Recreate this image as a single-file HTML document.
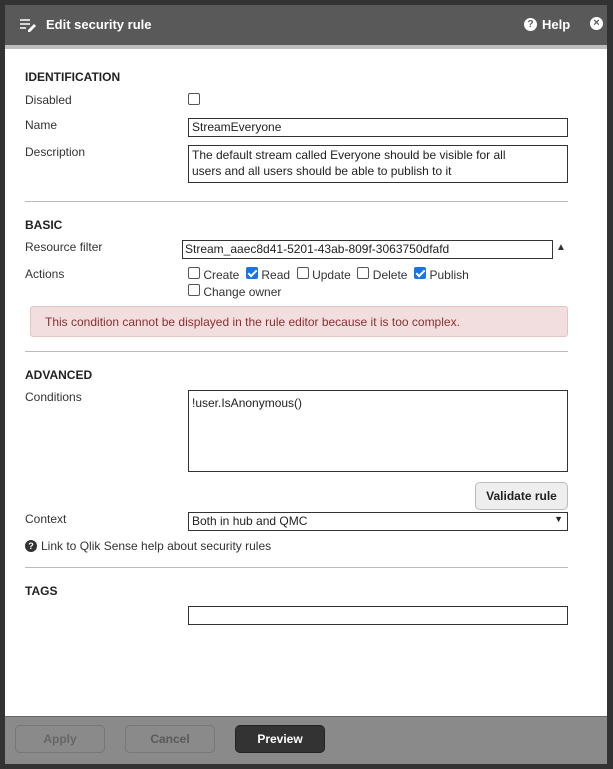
<!DOCTYPE html>
<html><head><style>
*{box-sizing:border-box;margin:0;padding:0}
body{width:613px;height:769px;background:#333;position:relative;font-family:"Liberation Sans",sans-serif;font-size:12px;color:#333;overflow:hidden}
.a{position:absolute}
.hdr{left:5px;top:5px;width:602px;height:40px;background:#595959;color:#fff;font-weight:bold;font-size:13px}
.bar{left:5px;top:45px;width:602px;height:4px;background:#bdbdbd}
.main{left:5px;top:49px;width:602px;height:667px;background:#fff}
.ftr{left:5px;top:716px;width:602px;height:48px;background:#8a8a8a;border-top:1px solid #666}
.h{font-weight:bold;font-size:12px;color:#222}
.lbl{font-size:12px;color:#333}
.inp{border:1px solid #333;background:#fff;font-size:12px;padding:1px 3px;color:#222}
.cb{width:12px;height:12px;border:1px solid #555;border-radius:2px;background:#fff;display:inline-block}
.cbc{background:#1a73e8;border-color:#1a73e8;position:relative}
.cbc:after{content:"";position:absolute;left:3px;top:0px;width:3px;height:7px;border:solid #fff;border-width:0 2px 2px 0;transform:rotate(45deg)}
.hr{left:25px;width:543px;height:1px;background:#bbb}
.btn{height:28px;border-radius:5px;text-align:center;line-height:26px;font-weight:bold;font-size:12px}
</style></head><body>
<div class="a hdr">
 <svg class="a" style="left:14px;top:13px" width="18" height="14" viewBox="0 0 18 14"><path d="M1 2h10M1 6h10M1 10h6" stroke="#fff" stroke-width="1.5"/><path d="M9 12l6-6 2 2-6 6h-2z" fill="#fff"/></svg>
 <div class="a" style="left:41px;top:12px">Edit security rule</div>
 <div class="a" style="left:519px;top:13px;width:13px;height:13px;border-radius:50%;background:#fff;color:#595959;font-size:10px;text-align:center;line-height:13px">?</div>
 <div class="a" style="left:537px;top:12px">Help</div>
 <div class="a" style="left:585px;top:12px;width:13px;height:13px;border-radius:50%;background:#fff;color:#595959;font-size:11px;text-align:center;line-height:13px">×</div>
</div>
<div class="a bar"></div>
<div class="a main"></div>
<div class="a h" style="left:25px;top:70px">IDENTIFICATION</div>
<div class="a lbl" style="left:25px;top:93px">Disabled</div>
<div class="a cb" style="left:188px;top:93px"></div>
<div class="a lbl" style="left:25px;top:118px">Name</div>
<div class="a inp" style="left:188px;top:118px;width:380px;height:19px">StreamEveryone</div>
<div class="a lbl" style="left:25px;top:145px">Description</div>
<div class="a inp" style="left:188px;top:145px;width:380px;height:38px;line-height:16px">The default stream called Everyone should be visible for all<br>users and all users should be able to publish to it</div>
<div class="a hr" style="top:201px"></div>
<div class="a h" style="left:25px;top:218px">BASIC</div>
<div class="a lbl" style="left:25px;top:240px">Resource filter</div>
<div class="a inp" style="left:182px;top:240px;width:371px;height:19px;padding-left:2px">Stream_aaec8d41-5201-43ab-809f-3063750dfafd</div>
<div class="a" style="left:556px;top:242px;font-size:10px;color:#333">▲</div>
<div class="a lbl" style="left:25px;top:267px">Actions</div>
<div class="a" style="left:188px;top:267px;font-size:12px">
<span class="cb"></span> Create&nbsp; <span class="cb cbc"></span> Read&nbsp; <span class="cb"></span> Update&nbsp; <span class="cb"></span> Delete&nbsp; <span class="cb cbc"></span> Publish</div>
<div class="a" style="left:188px;top:284px;font-size:12px"><span class="cb"></span> Change owner</div>
<div class="a" style="left:30px;top:306px;width:538px;height:31px;background:#f2dede;border:1px solid #e5c4c4;border-radius:3px;color:#8a3030;padding:8px 0 0 14px">This condition cannot be displayed in the rule editor because it is too complex.</div>
<div class="a hr" style="top:351px"></div>
<div class="a h" style="left:25px;top:368px">ADVANCED</div>
<div class="a lbl" style="left:25px;top:390px">Conditions</div>
<div class="a inp" style="left:188px;top:390px;width:380px;height:82px;padding-top:5px">!user.IsAnonymous()</div>
<div class="a btn" style="left:475px;top:482px;width:93px;background:#eee;border:1px solid #bbb;color:#222">Validate rule</div>
<div class="a lbl" style="left:25px;top:512px">Context</div>
<div class="a inp" style="left:188px;top:512px;width:380px;height:19px">Both in hub and QMC<span style="position:absolute;right:4px;top:1px;font-size:9px">▼</span></div>
<div class="a" style="left:25px;top:540px;width:12px;height:12px;border-radius:50%;background:#333;color:#fff;font-size:9px;text-align:center;line-height:12px;font-weight:bold">?</div>
<div class="a lbl" style="left:41px;top:539px">Link to Qlik Sense help about security rules</div>
<div class="a hr" style="top:567px"></div>
<div class="a h" style="left:25px;top:584px">TAGS</div>
<div class="a inp" style="left:188px;top:606px;width:380px;height:19px"></div>
<div class="a ftr"></div>
<div class="a btn" style="left:15px;top:725px;width:90px;border:1px solid #777;color:#666">Apply</div>
<div class="a btn" style="left:125px;top:725px;width:90px;border:1px solid #777;color:#5a5a5a">Cancel</div>
<div class="a btn" style="left:235px;top:725px;width:90px;background:#333;border:1px solid #222;color:#fff">Preview</div>
</body></html>
